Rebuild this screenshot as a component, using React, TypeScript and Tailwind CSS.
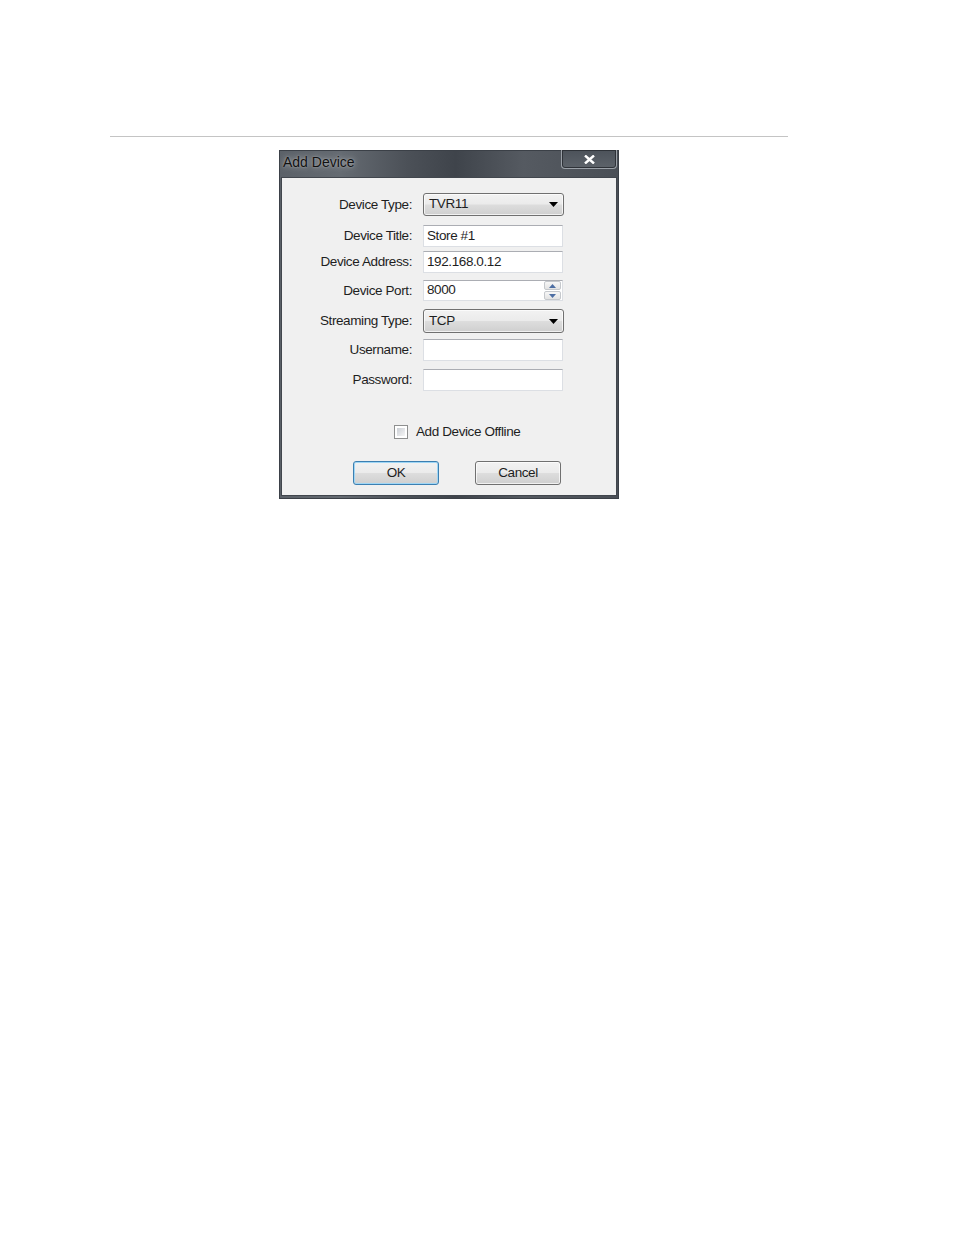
import React from "react";

const labelFont = "font-['Liberation_Sans',Arial,sans-serif] text-[13.5px] tracking-[-0.4px] text-[#1e1e1e]";

function Label({ children }: { children: React.ReactNode }) {
  return <div className={`w-[130px] shrink-0 text-right leading-none ${labelFont}`}>{children}</div>;
}

function Combo({ value }: { value: string }) {
  return (
    <div className="ml-[11px] flex h-full w-[141px] items-center justify-between rounded-[3px] border border-[#707070] bg-[linear-gradient(180deg,#f2f2f2_0%,#ebebeb_48%,#dddddd_52%,#cfcfcf_100%)] pl-[5px] pr-[5px] shadow-[inset_0_0_0_1px_rgba(255,255,255,0.7)]">
      <span className={labelFont}>{value}</span>
      <svg width="9" height="5" viewBox="0 0 9 5">
        <path d="M0 0h9L4.5 5z" fill="#000" />
      </svg>
    </div>
  );
}

function TextBox({ value, spinner }: { value?: string; spinner?: boolean }) {
  return (
    <div className="ml-[11px] flex h-full w-[140px] items-center border border-[#dcdfe4] border-t-[#abadb3] bg-white">
      <span className={`flex-1 pl-[3px] ${labelFont}`}>{value}</span>
      {spinner && (
        <div className="mr-[1px] flex h-[19px] w-[17px] flex-col gap-[1px]">
          {[0, 1].map((i) => (
            <div
              key={i}
              className="flex flex-1 items-center justify-center rounded-[2px] border border-[#c5c8cc] bg-[linear-gradient(180deg,#f7f7f7,#e3e3e3)]"
            >
              <svg width="7" height="4" viewBox="0 0 7 4">
                <path d={i === 0 ? "M0 4h7L3.5 0z" : "M0 0h7L3.5 4z"} fill="#4d6ea3" />
              </svg>
            </div>
          ))}
        </div>
      )}
    </div>
  );
}

function Button({ children, focused }: { children: React.ReactNode; focused?: boolean }) {
  return (
    <div
      className={`flex h-[24px] w-[86px] items-center justify-center rounded-[3px] border bg-[linear-gradient(180deg,#f2f2f2_0%,#ebebeb_48%,#dddddd_52%,#cfcfcf_100%)] ${
        focused
          ? "border-[#3c7fb1] shadow-[inset_0_0_0_1px_#9fd6f5]"
          : "border-[#707070] shadow-[inset_0_0_0_1px_rgba(255,255,255,0.7)]"
      }`}
    >
      <span className={labelFont}>{children}</span>
    </div>
  );
}

export default function App() {
  return (
    <div className="min-h-[1235px] w-full bg-white pt-[136px]">
      <div className="ml-[110px] h-px w-[678px] bg-[#c4c4c4]" />

      <div className="ml-[279px] mt-[13px] flex h-[349px] w-[340px] flex-col border border-[#3b4047] bg-[linear-gradient(90deg,#5b6168_0%,#656b72_18%,#4b5057_38%,#3f444b_52%,#555a61_72%,#4a4f56_100%)]">
        {/* title bar */}
        <div className="flex h-[26px] shrink-0 items-start justify-between">
          <span className="ml-[3px] mt-[2px] font-['Liberation_Sans',Arial,sans-serif] text-[14px] leading-[18px] text-[#111] [text-shadow:0_0_6px_rgba(255,255,255,0.55),0_0_2px_rgba(255,255,255,0.4)]">
            Add Device
          </span>
          <div className="-mt-px mr-[1px] flex h-[19px] w-[56px] items-center justify-center rounded-b-[4px] border border-t-0 border-[#9aa0a7] bg-[linear-gradient(180deg,#4c525a,#5d636a)] shadow-[inset_0_0_0_1px_#2e3238]">
            <svg width="11" height="9" viewBox="0 0 11 9">
              <path d="M1 0.5L10 8.5M10 0.5L1 8.5" stroke="#fff" strokeWidth="2.4" />
            </svg>
          </div>
        </div>

        {/* client area */}
        <div className="mx-[1px] mb-[2px] flex flex-1 flex-col border border-[#41464d] bg-[#f0f0f0] pt-[15px]">
          <div className="flex h-[23px] items-center">
            <Label>Device Type:</Label>
            <Combo value="TVR11" />
          </div>
          <div className="mt-[9px] flex h-[22px] items-center">
            <Label>Device Title:</Label>
            <TextBox value="Store #1" />
          </div>
          <div className="mt-[4px] flex h-[22px] items-center">
            <Label>Device Address:</Label>
            <TextBox value="192.168.0.12" />
          </div>
          <div className="mt-[7px] flex h-[21px] items-center">
            <Label>Device Port:</Label>
            <TextBox value="8000" spinner />
          </div>
          <div className="mt-[8px] flex h-[24px] items-center">
            <Label>Streaming Type:</Label>
            <Combo value="TCP" />
          </div>
          <div className="mt-[6px] flex h-[22px] items-center">
            <Label>Username:</Label>
            <TextBox />
          </div>
          <div className="mt-[8px] flex h-[22px] items-center">
            <Label>Password:</Label>
            <TextBox />
          </div>

          <div className="ml-[112px] mt-[31px] flex items-center gap-[8px]">
            <div className="h-[14px] w-[14px] border border-[#8e8f8f] bg-white p-[2px]">
              <div className="h-full w-full bg-[linear-gradient(135deg,#cbcfd5,#f6f6f6)]" />
            </div>
            <span className={labelFont}>Add Device Offline</span>
          </div>

          <div className="ml-[71px] mt-[19px] flex gap-[36px]">
            <Button focused>OK</Button>
            <Button>Cancel</Button>
          </div>
        </div>
      </div>
    </div>
  );
}
